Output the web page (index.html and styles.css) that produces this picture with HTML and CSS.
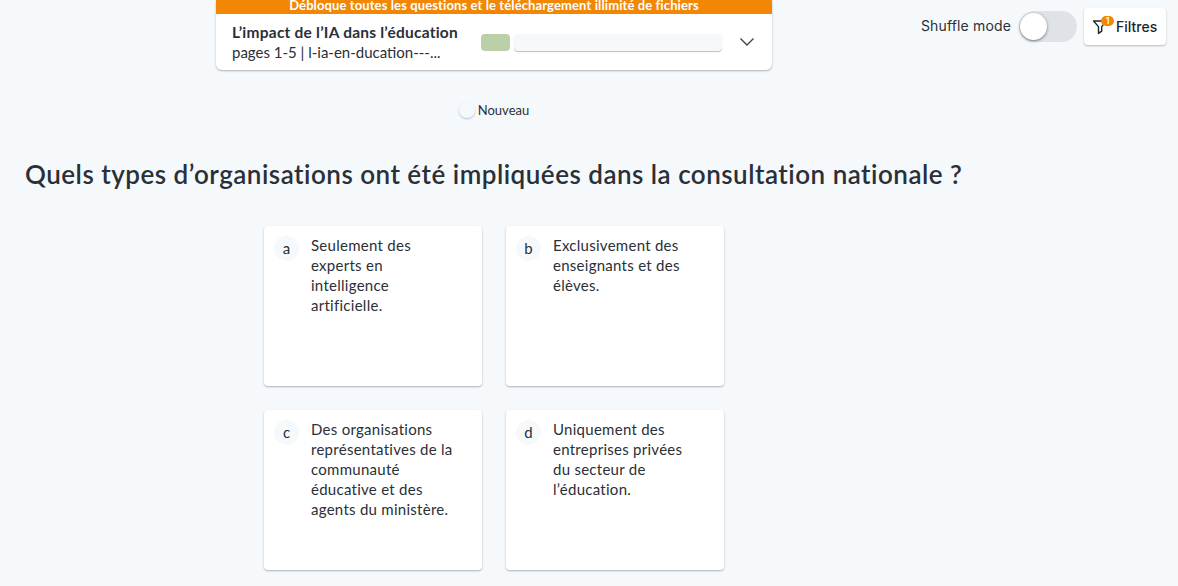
FILE: index.html
```html
<!DOCTYPE html>
<html lang="fr">
<head>
    <meta charset="UTF-8">
    <meta name="viewport" content="width=device-width, initial-scale=1.0">
    <title>Quiz</title>
    <link rel="stylesheet" href="styles.css">
</head>
<body>
    <div class="page">
        <!-- Colonne principale -->
        <div class="main">
            <div class="doc-card">
                <div class="banner">Débloque toutes les questions et le téléchargement illimité de fichiers</div>
                <div class="doc-body">
                    <div class="doc-text">
                        <div class="doc-title">L’impact de l’IA dans l’éducation</div>
                        <div class="doc-sub">pages 1-5 | l-ia-en-ducation---...</div>
                    </div>
                    <div class="progress-done"></div>
                    <div class="progress-rest"></div>
                    <svg class="chevron" width="16" height="10" viewBox="0 0 16 10" fill="none">
                        <path d="M1.5 1.5L8 8L14.5 1.5" stroke="#3d4650" stroke-width="1.4"/>
                    </svg>
                </div>
            </div>

            <div class="status">
                <span class="status-dot"></span>
                <span>Nouveau</span>
            </div>

            <h1 class="question">Quels types d’organisations ont été impliquées dans la consultation nationale ?</h1>

            <div class="answers">
                <div class="answer">
                    <span class="letter">a</span>
                    <p>Seulement des experts en intelligence artificielle.</p>
                </div>
                <div class="answer">
                    <span class="letter">b</span>
                    <p>Exclusivement des enseignants et des élèves.</p>
                </div>
                <div class="answer">
                    <span class="letter">c</span>
                    <p>Des organisations représentatives de la communauté éducative et des agents du ministère.</p>
                </div>
                <div class="answer">
                    <span class="letter">d</span>
                    <p>Uniquement des entreprises privées du secteur de l’éducation.</p>
                </div>
            </div>
        </div>

        <!-- Options -->
        <div class="controls">
            <span class="shuffle-label">Shuffle mode</span>
            <div class="toggle"><span class="knob"></span></div>
            <button class="filter-btn">
                <span class="filter-icon">
                    <svg width="16" height="17" viewBox="0 0 16 17" fill="none">
                        <path d="M1.5 3H14.5L9.7 8.6V13.2L6.5 15.4V8.6Z" stroke="#20262c" stroke-width="1.4" stroke-linejoin="round"/>
                    </svg>
                    <span class="badge">1</span>
                </span>
                Filtres
            </button>
        </div>
    </div>
</body>
</html>
```

FILE: styles.css
```css
* {
    box-sizing: border-box;
}

body {
    font-family: "Lato", "Noto Sans", sans-serif;
    background-color: #f5f9fc;
    color: #2a3037;
    margin: 0;
    height: 586px;
    overflow: hidden;
}

.page {
    display: flex;
    justify-content: space-between;
}

.main {
    width: 988px;
    flex-shrink: 0;
    margin-right: -100px;
}

.doc-card {
    width: 556px;
    margin: 0 auto;
    background-color: #fff;
    border-radius: 0 0 6px 6px;
    box-shadow: 0 1px 2px rgba(60, 70, 90, 0.4);
    overflow: hidden;
}

.banner {
    height: 14px;
    background-color: #f28705;
    color: #fff;
    font-size: 13px;
    font-weight: 700;
    letter-spacing: 0.11px;
    line-height: 11px;
    text-align: center;
    white-space: nowrap;
}

.doc-body {
    height: 56px;
    display: flex;
    align-items: center;
    padding: 0 17px 0 16px;
}

.doc-text {
    width: 249px;
    flex-shrink: 0;
    white-space: nowrap;
}

.doc-title {
    font-size: 15.5px;
    font-weight: 700;
    letter-spacing: 0.23px;
    line-height: 20px;
}

.doc-sub {
    font-size: 15px;
    line-height: 20px;
}

.progress-done {
    width: 29px;
    height: 17px;
    background-color: #bbd0a8;
    border-radius: 4px;
}

.progress-rest {
    width: 208px;
    height: 17px;
    margin-left: 4px;
    background-color: #f5f9fc;
    border-radius: 4px;
    box-shadow: 0 1px 1px rgba(60, 70, 90, 0.35);
}

.chevron {
    margin-left: auto;
}

.status {
    display: flex;
    justify-content: center;
    align-items: center;
    gap: 3px;
    margin-top: 31px;
    height: 18px;
    font-size: 13px;
}

.status-dot {
    width: 16px;
    height: 16px;
    border-radius: 50%;
    background-color: #f5f9fc;
    box-shadow: 0 1px 2px rgba(60, 70, 90, 0.3);
}

.question {
    margin: 39px 0 0;
    padding-left: 25px;
    font-size: 26px;
    font-weight: 600;
    letter-spacing: 0.49px;
    line-height: 32px;
    white-space: nowrap;
}

.answers {
    display: grid;
    grid-template-columns: 218px 218px;
    grid-template-rows: 160px 160px;
    gap: 24px;
    justify-content: center;
    margin-top: 36px;
}

.answer {
    display: flex;
    background-color: #fff;
    border-radius: 4px;
    box-shadow: 0 1px 2px rgba(60, 70, 90, 0.4);
    padding: 10px 23px 0 10px;
}

.letter {
    width: 25px;
    height: 25px;
    flex-shrink: 0;
    border-radius: 50%;
    background-color: #f5f9fc;
    font-size: 15px;
    line-height: 25px;
    text-align: center;
}

.answer p {
    margin: -1px 0 0 12px;
    font-size: 15px;
    letter-spacing: 0.27px;
    line-height: 20px;
}

.controls {
    flex-shrink: 0;
    display: flex;
    align-items: center;
    height: 37px;
    margin-top: 8px;
    padding-right: 12px;
}

.shuffle-label {
    font-family: "Inter", sans-serif;
    font-size: 14px;
    letter-spacing: 0.15px;
    line-height: 35px;
    height: 37px;
    white-space: nowrap;
}

.toggle {
    position: relative;
    width: 58px;
    height: 31px;
    margin-left: 8px;
    border-radius: 16px;
    background-color: #dfe3e7;
}

.knob {
    position: absolute;
    left: 1px;
    top: 2px;
    width: 27px;
    height: 27px;
    border-radius: 50%;
    background-color: #fff;
    box-shadow: 0 1px 3px rgba(0, 0, 0, 0.5);
}

.filter-btn {
    display: flex;
    align-items: center;
    gap: 8px;
    width: 82px;
    height: 37px;
    margin-left: 7px;
    padding: 0 8px;
    border: none;
    border-radius: 4px;
    background-color: #fff;
    box-shadow: 0 1px 2px rgba(60, 70, 90, 0.35);
    color: #20262c;
    font-family: "Inter", sans-serif;
    font-size: 14px;
    font-weight: 500;
}

.filter-icon {
    position: relative;
    display: flex;
}

.badge {
    position: absolute;
    left: 9px;
    top: -2px;
    width: 13px;
    height: 10px;
    border-radius: 5px;
    background-color: #f28705;
    color: #fff;
    font-size: 9px;
    line-height: 10px;
    text-align: center;
}
```
